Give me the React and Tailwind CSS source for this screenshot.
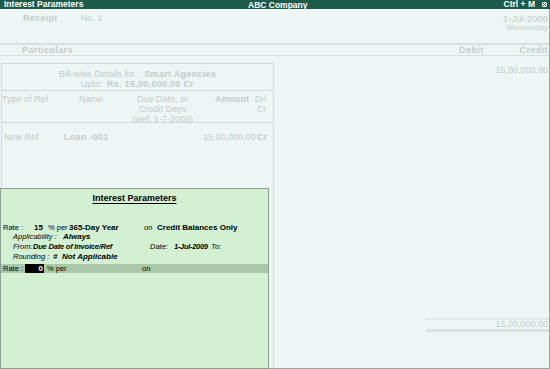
import React from 'react';

const faded = 'text-[#c3cccb]';

export default function App() {
  return (
    <div className="w-[550px] h-[369px] relative overflow-hidden bg-[#eef6f5] flex flex-col font-['Liberation_Sans',Arial,sans-serif] text-[9px] leading-none whitespace-nowrap">
      {/* Title bar */}
      <div className="h-[9px] bg-[#1c5a4b] text-white font-bold text-[8.5px] flex items-center px-[4px] relative">
        <span>Interest Parameters</span>
        <span className="absolute left-[248px] top-[1px]">ABC Company</span>
        <span className="ml-auto mr-[6px]">Ctrl + M</span>
        <span className="w-[7px] h-[7px] bg-white border border-[#1c5a4b] flex items-center justify-center mr-[-2px]">
          <svg width="5" height="5" viewBox="0 0 5 5">
            <path d="M0.5 0.5 L4.5 4.5 M4.5 0.5 L0.5 4.5" stroke="#1c5a4b" strokeWidth="1" />
          </svg>
        </span>
      </div>

      {/* Body */}
      <div className="flex-1 flex flex-col border-r border-b border-[#98a89e]">
        {/* Voucher header */}
        <div className={`h-[34px] flex ${faded}`}>
          <div className="flex pt-[5px] pl-[23px] gap-[23px]">
            <span className="font-bold tracking-[0.3px]">Receipt</span>
            <span>No. 1</span>
          </div>
          <div className="ml-auto flex flex-col items-end pt-[5px] pr-[1px]">
            <span className="text-[9.5px]">1-Jul-2009</span>
            <span className="text-[8px]">Wednesday</span>
          </div>
        </div>
        <div className="h-[2px] bg-[#d8e0df]" />
        <div className={`h-[10px] flex items-center font-bold tracking-[0.4px] ${faded}`}>
          <span className="pl-[22px]">Particulars</span>
          <span className="ml-auto mr-[36px]">Debit</span>
          <span className="mr-[1px]">Credit</span>
        </div>
        <div className="h-[1px] bg-[#d8e0df]" />

        {/* Content */}
        <div className="flex-1 flex">
          <div className="w-[274px] pt-[7px] pl-[1px] flex flex-col">
            <div className={`flex-1 border-l border-t border-r border-[#d3dbda] flex flex-col ${faded}`}>
              <div className="h-[27px] border-b border-[#d3dbda] flex flex-col items-center pt-[6px] gap-[1px]">
                <span>
                  Bill-wise Details for : <b className="ml-[2px] tracking-[0.3px]">Smart Agencies</b>
                </span>
                <span>
                  Upto: <b className="ml-[2px] tracking-[0.3px]">Rs. 15,00,000.00 Cr</b>
                </span>
              </div>
              <div className="h-[32px] border-b border-[#d3dbda] flex pt-[4px]">
                <span className="w-[77px] shrink-0">Type of Ref</span>
                <span className="w-[40px] shrink-0">Name</span>
                <span className="w-[87px] shrink-0 flex flex-col items-center gap-[1px]">
                  <span>Due Date, or</span>
                  <span>Credit Days</span>
                  <span>(wef. 1-7-2009)</span>
                </span>
                <span className="w-[43px] shrink-0 text-right font-bold">Amount</span>
                <span className="flex-1 flex flex-col items-end pr-[7px] gap-[1px] text-[8.5px]">
                  <span>Dr/</span>
                  <span>Cr</span>
                </span>
              </div>
              <div className="flex pt-[10px]">
                <span className="w-[62px] shrink-0 pl-[2px]">New Ref</span>
                <span className="w-[139px] shrink-0 font-bold tracking-[0.3px]">Loan -001</span>
                <span className="w-[48px] shrink-0 text-right">15,00,000.00</span>
                <span className="ml-[6px] font-bold">Cr</span>
              </div>
            </div>
          </div>

          <div className={`flex-1 flex flex-col ${faded}`}>
            <div className="text-right pt-[10px] pr-[1px]">15,00,000.00</div>
            <div className="mt-auto mb-[36px] ml-[152px] flex flex-col">
              <div className="h-[2px] bg-[#e2e8e7]" />
              <div className="h-[9px] flex items-center justify-end pr-[1px]">15,00,000.00</div>
              <div className="h-[3px] bg-[#dbe2e1]" />
            </div>
          </div>
        </div>
      </div>

      {/* Interest Parameters popup */}
      <div className="absolute left-0 top-[188px] w-[269px] h-[181px] bg-[#d3f0d3] border border-[#8e9e92] text-black text-[7.5px]">
        <div className="flex justify-center pt-[5px]">
          <span className="font-bold text-[9px] underline underline-offset-[2px]">Interest Parameters</span>
        </div>
        <div className="mt-[20px] flex items-center pl-[2px] h-[9px]">
          <span className="w-[31px] shrink-0">Rate :</span>
          <span className="w-[14px] shrink-0 font-bold text-[8px]">15</span>
          <span className="w-[21px] shrink-0">% per</span>
          <span className="w-[75px] shrink-0 font-bold text-[8px]">365-Day Year</span>
          <span className="w-[13px] shrink-0">on</span>
          <span className="font-bold text-[8px]">Credit Balances Only</span>
        </div>
        <div className="pl-[12px] italic flex flex-col">
          <div className="h-[10px] flex items-center">
            <span className="w-[50px] shrink-0">Applicability :</span>
            <b className="text-[8px]">Always</b>
          </div>
          <div className="h-[10px] flex items-center">
            <span className="w-[20px] shrink-0">From:</span>
            <b className="w-[117px] shrink-0 tracking-[-0.2px]">Due Date of Invoice/Ref</b>
            <span className="w-[24px] shrink-0">Date:</span>
            <b className="w-[37px] shrink-0 tracking-[-0.3px]">1-Jul-2009</b>
            <span>To:</span>
          </div>
          <div className="h-[10px] flex items-center">
            <span className="w-[40px] shrink-0">Rounding :</span>
            <b className="text-[8px]">#&nbsp; Not Applicable</b>
          </div>
        </div>
        <div className="mt-[2px] h-[9px] bg-[#a9c8a9] flex items-center pl-[2px]">
          <span className="w-[22px] shrink-0">Rate :</span>
          <span className="w-[19px] shrink-0 h-[9px] bg-black text-white font-bold text-[8px] flex items-center justify-end pr-[1px]">0</span>
          <span className="w-[98px] shrink-0 pl-[3px]">% per</span>
          <span>on</span>
        </div>
      </div>
    </div>
  );
}
